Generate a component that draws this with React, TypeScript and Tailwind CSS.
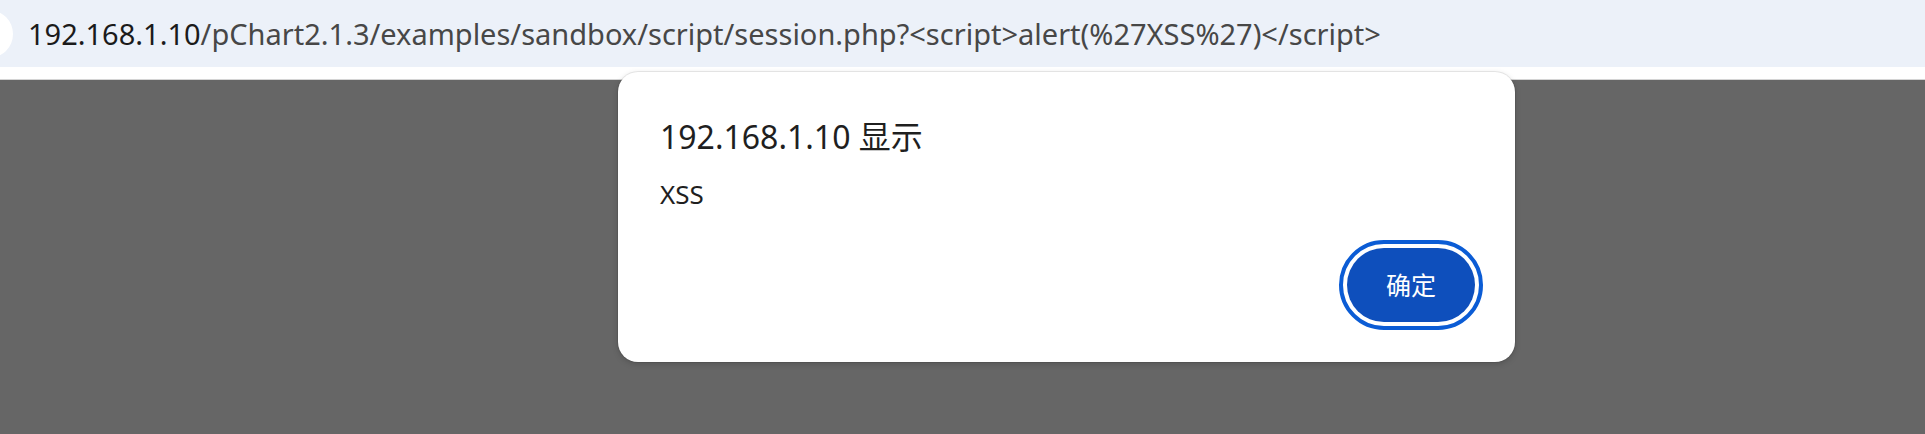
import React from "react";

export default function App() {
  const font = { fontFamily: '"Noto Sans", "Noto Sans CJK SC", sans-serif' };
  return (
    <div className="relative w-[1925px] h-[434px] overflow-hidden bg-[#666666]" style={font}>
      <div className="h-[67px] bg-[#ecf1f9] flex items-center">
        <div className="w-[48px] h-[48px] rounded-full bg-white ml-[-35px] shrink-0" />
        <div className="ml-[15px] text-[29px] leading-[34px] whitespace-nowrap">
          <span className="text-[#1b1b1b]">192.168.1.10</span>
          <span className="text-[#474747]">/pChart2.1.3/examples/sandbox/script/session.php?&lt;script&gt;alert(%27XSS%27)&lt;/script&gt;</span>
        </div>
      </div>
      <div className="h-[12px] bg-white" />
      <div className="h-[1px] bg-[#d4d4d4]" />

      <div className="absolute left-[618px] top-[72px] w-[897px] h-[290px] bg-white rounded-[20px] shadow-[0_0_0_1px_rgba(0,0,0,0.07),0_2px_6px_rgba(0,0,0,0.18)] flex flex-col pl-[42px] pr-[40px] pt-[49px] pb-[40px]">
        <div className="text-[32px] leading-[32px] text-[#1f1f1f] whitespace-nowrap">192.168.1.10 显示</div>
        <div className="mt-[28px] text-[26px] leading-[26px] text-[#1f1f1f]">XSS</div>
        <div className="mt-auto flex justify-end">
          <button className="w-[128px] h-[74px] rounded-full bg-[#0e4fbc] text-white text-[25px] leading-[25px] outline-4 outline-offset-4 outline-[#0b5cd5]">
            确定
          </button>
        </div>
      </div>
    </div>
  );
}
